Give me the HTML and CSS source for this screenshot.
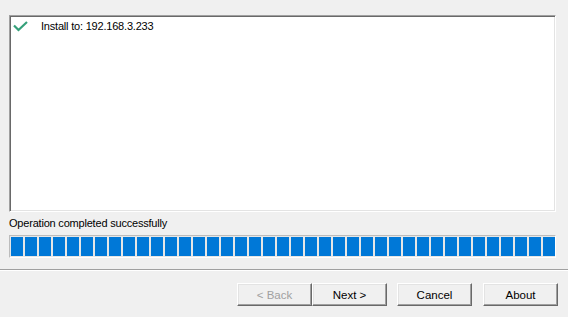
FILE: index.html
```html
<!DOCTYPE html>
<html lang="en">
<head>
  <meta charset="UTF-8" />
  <meta name="viewport" content="width=device-width, initial-scale=1" />
  <title>Install</title>
  <link rel="stylesheet" href="styles.css">
</head>
<body>
  <div class="window">
    <div class="list">
      <div class="item">
        <svg class="check" width="15" height="11" viewBox="0 0 15 11">
          <polyline points="1,4.5 5.5,9 14,1" fill="none" stroke="#35a07a" stroke-width="2.2" />
        </svg>
        <span>Install to: 192.168.3.233</span>
      </div>
    </div>

    <div class="status">Operation completed successfully</div>
    <div class="progress" id="progress"></div>

    <div class="separator"></div>

    <div class="buttons">
      <button class="btn" disabled>&lt; Back</button>
      <button class="btn">Next &gt;</button>
      <button class="btn gap">Cancel</button>
      <button class="btn gap">About</button>
    </div>
  </div>

  <script>
    // blok progress bar
    const progress = document.getElementById("progress");
    for (let i = 0; i < 39; i++) {
      const b = document.createElement("div");
      b.className = "block";
      progress.appendChild(b);
    }
  </script>
</body>
</html>
```

FILE: styles.css
```css
body {
  margin: 0;
  background-color: #f0f0f0;
  font-family: "Liberation Sans", Arial, sans-serif;
  font-size: 11px;
  letter-spacing: -0.2px;
  color: #000;
}

.window {
  width: 568px;
  height: 317px;
  display: flex;
  flex-direction: column;
}

.list {
  box-sizing: border-box;
  margin: 15px 12px 0 9px;
  height: 197px;
  background-color: #fff;
  border: 1px solid;
  border-color: #a0a0a0 #fff #fff #a0a0a0;
  box-shadow: inset 1px 1px 0 #696969, inset -1px -1px 0 #e3e3e3;
}

.item {
  display: flex;
  align-items: center;
  height: 16px;
  margin-top: 2px;
  padding-left: 3px;
}

.check {
  display: block;
  margin-right: 13px;
}

.status {
  margin: 5px 0 0 9px;
  line-height: 13px;
}

.progress {
  box-sizing: border-box;
  display: flex;
  gap: 2px;
  height: 23px;
  margin: 5px 12px 0 9px;
  padding: 1px;
  background-color: #e6e6e6;
  border: 1px solid;
  border-color: #bcbcbc #fff #fff #bcbcbc;
}

.block {
  width: 12px;
  flex: none;
  background-color: #0078d7;
}

.separator {
  margin-top: 11px;
  border-top: 1px solid #a0a0a0;
  border-bottom: 1px solid #fff;
}

.buttons {
  display: flex;
  justify-content: flex-end;
  padding: 12px 10px 0 0;
}

.btn {
  box-sizing: border-box;
  width: 75px;
  height: 23px;
  padding: 0;
  font-family: inherit;
  font-size: 11.5px;
  letter-spacing: 0;
  color: #000;
  background-color: #f0f0f0;
  border: 1px solid;
  border-color: #fff #696969 #696969 #fff;
  box-shadow: inset -1px -1px 0 #a0a0a0, inset 1px 1px 0 #e3e3e3;
}

.btn:disabled {
  color: #a0a0a0;
}

.btn.gap {
  margin-left: 10px;
}

.btn.gap:last-child {
  margin-left: 11px;
}
```
